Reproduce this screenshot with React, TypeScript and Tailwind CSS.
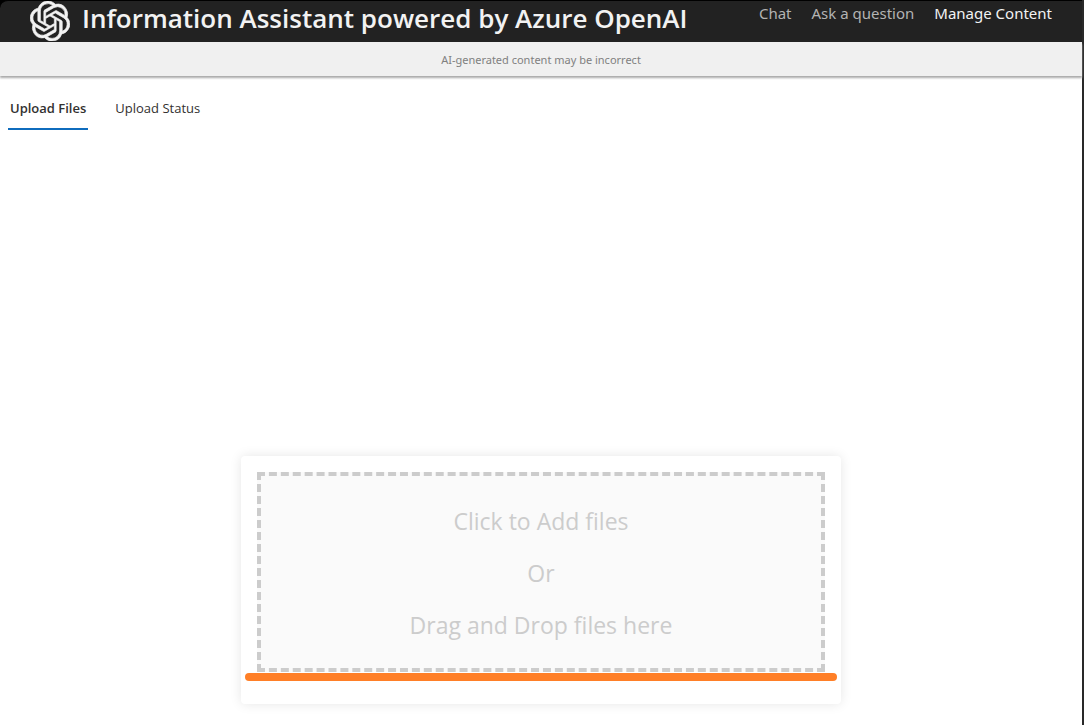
import { useRef, useState } from "react";
import { SiOpenai } from "react-icons/si";

const links = ["Chat", "Ask a question", "Manage Content"];
const tabs = ["Upload Files", "Upload Status"];

export default function App() {
  const [tab, setTab] = useState(tabs[0]);
  const fileInput = useRef<HTMLInputElement>(null);

  return (
    <div className="min-h-screen border-r-2 border-[#292929] bg-white font-['Open_Sans','Noto_Sans',sans-serif] text-[#323130]">
      <header className="bg-black">
        <div className="flex h-[42px] items-start justify-between rounded-tl-lg border-t border-black bg-[#222222] px-[30px]">
          <a href="#" className="flex items-start gap-3 text-[#f2f2f2]">
            <SiOpenai className="size-10 shrink-0 stroke-[#f2f2f2] [stroke-width:0.4]" aria-hidden="true" />
            <h1 className="text-[26px] leading-[34px] font-semibold whitespace-nowrap">
              Information Assistant powered by Azure OpenAI
            </h1>
          </a>
          <nav className="flex gap-5 font-['Noto_Sans',sans-serif] text-[15px] leading-6 whitespace-nowrap">
            {links.map((name) => (
              <a
                key={name}
                href="#"
                className={name === "Manage Content" ? "text-[#f2f2f2]" : "text-[#b3b3b3]"}
              >
                {name}
              </a>
            ))}
          </nav>
        </div>
      </header>
      <div className="bg-[#f0f0f0] pt-[9px] pb-[7px] text-center font-['Noto_Sans',sans-serif] text-[11px] leading-[18px] text-[#808080] shadow-[0_2px_2px_0_#aaaaaa]">
        AI-generated content may be incorrect
      </div>

      <main>
        <div role="tablist" className="flex gap-5 px-2 pt-[10px]">
          {tabs.map((name) => (
            <button
              key={name}
              type="button"
              role="tab"
              aria-selected={tab === name}
              onClick={() => setTab(name)}
              className={
                tab === name
                  ? "h-11 border-b-2 border-[#0f6cbd] px-0.5 pt-1 text-[13px] font-semibold"
                  : "h-11 border-b-2 border-transparent px-[7px] pt-1 text-[13px]"
              }
            >
              {name}
            </button>
          ))}
        </div>

        <section className="relative mx-auto mt-[326px] w-full max-w-[600px] rounded-sm bg-white px-4 pt-4 pb-8 shadow-[0_0_12px_rgba(0,0,0,0.1)]">
          <button
            type="button"
            onClick={() => fileInput.current?.click()}
            className="flex w-full flex-col items-center gap-5 border-4 border-dashed border-[#cccccc] bg-[#fafafa] pt-[29px] pb-[27px] text-[23px] leading-8 text-[#cccccc]"
          >
            <span>Click to Add files</span>
            <span>Or</span>
            <span>Drag and Drop files here</span>
          </button>
          <input ref={fileInput} type="file" multiple aria-label="Add files" className="hidden" />
          <div className="absolute inset-x-1 bottom-[23px] h-2 rounded-full bg-[#ff7f27]" />
        </section>
      </main>
    </div>
  );
}
